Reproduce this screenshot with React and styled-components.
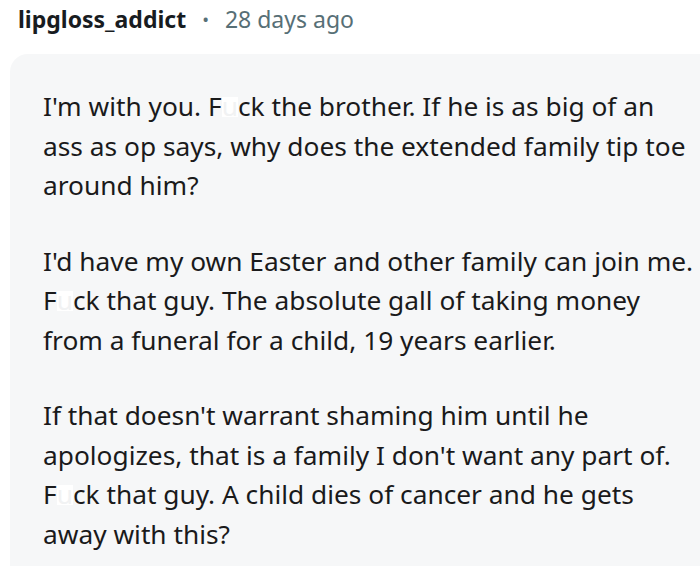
import React from 'react'
import styled, { createGlobalStyle } from 'styled-components'

const GlobalStyle = createGlobalStyle`
  html, body {
    margin: 0;
    padding: 0;
    background: #ffffff;
    overflow: hidden;
  }
  body {
    font-family: 'Noto Sans', 'Open Sans', sans-serif;
  }
`

const Page = styled.div`
  width: 700px;
  height: 566px;
  overflow: hidden;
  background: #fff;
`

const Meta = styled.div`
  display: flex;
  align-items: center;
  gap: 16px;
  padding: 0 0 0 18px;
  height: 38px;
`

const Author = styled.span`
  font-size: 23px;
  font-weight: 700;
  color: #181c1f;
`

const Dot = styled.span`
  font-size: 18px;
  color: #576f76;
`

const Time = styled.span`
  font-size: 23px;
  color: #576f76;
`

const Bubble = styled.div`
  margin: 16px -60px 0 10px;
  padding: 33px 0 40px 33px;
  background: #f6f7f8;
  border-radius: 18px 0 0 0;
  min-height: 600px;
`

const Para = styled.p`
  margin: 0 0 36px;
  white-space: nowrap;
  font-size: 26.3px;
  line-height: 39.5px;
  color: #1a1a1b;
`

const Blot = styled.span`
  display: inline-block;
  line-height: 0.75em;
  background: #ffffff;
  color: #f1f2f3;
`

const Censor = () => (
  <>F<Blot>u</Blot>ck</>
)

export default function App() {
  return (
    <Page>
      <GlobalStyle />
      <Meta>
        <Author>lipgloss_addict</Author>
        <Dot>•</Dot>
        <Time>28 days ago</Time>
      </Meta>
      <Bubble>
        <Para>
          I'm with you. <Censor /> the brother. If he is as big of an<br />
          ass as op says, why does the extended family tip toe<br />
          around him?
        </Para>
        <Para>
          I'd have my own Easter and other family can join me.<br />
          <Censor /> that guy. The absolute gall of taking money<br />
          from a funeral for a child, 19 years earlier.
        </Para>
        <Para>
          If that doesn't warrant shaming him until he<br />
          apologizes, that is a family I don't want any part of.<br />
          <Censor /> that guy. A child dies of cancer and he gets<br />
          away with this?
        </Para>
      </Bubble>
    </Page>
  )
}
